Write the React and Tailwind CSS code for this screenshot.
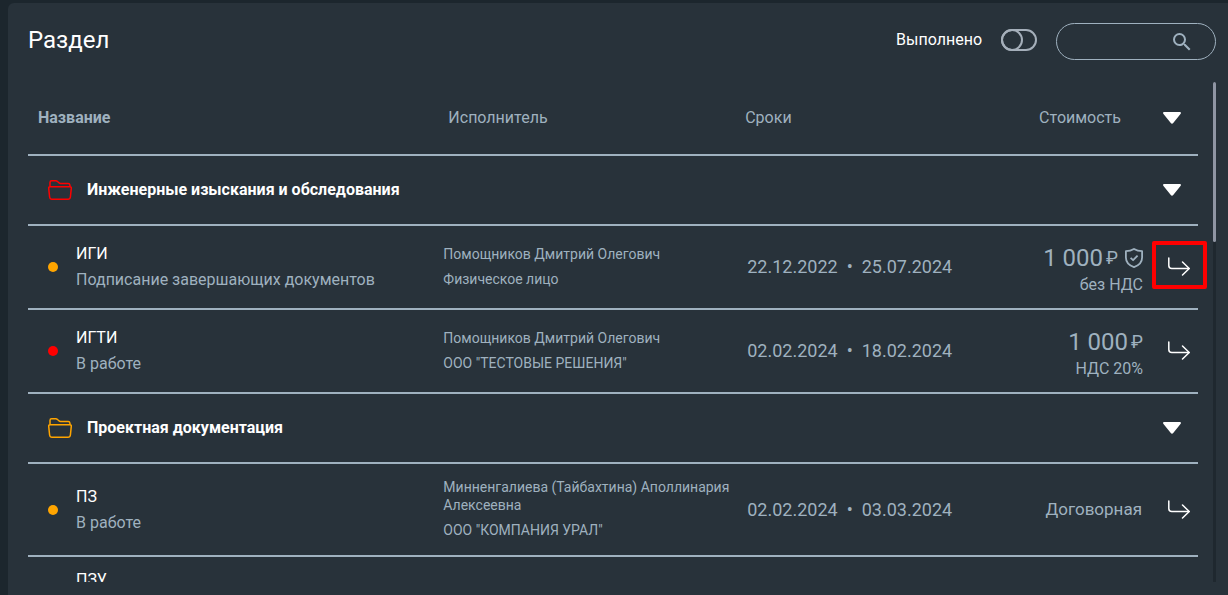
import { Fragment, useState } from 'react'
import { MdSearch } from 'react-icons/md'

const DOT_STYLES = {
  orange: 'bg-[#ffa500]',
  red: 'bg-[#ff0000]',
}

const FOLDER_STYLES = {
  orange: 'text-[#ffa500]',
  red: 'text-[#ff0000]',
}

const GROUPS = [
  {
    title: 'Инженерные изыскания и обследования',
    color: 'red',
    rows: [
      {
        code: 'ИГИ',
        status: 'Подписание завершающих документов',
        color: 'orange',
        person: 'Помощников Дмитрий Олегович',
        company: 'Физическое лицо',
        from: '22.12.2022',
        to: '25.07.2024',
        price: '1 000',
        tax: 'без НДС',
        secured: true,
        marked: true,
      },
      {
        code: 'ИГТИ',
        status: 'В работе',
        color: 'red',
        person: 'Помощников Дмитрий Олегович',
        company: 'ООО "ТЕСТОВЫЕ РЕШЕНИЯ"',
        from: '02.02.2024',
        to: '18.02.2024',
        price: '1 000',
        tax: 'НДС 20%',
      },
    ],
  },
  {
    title: 'Проектная документация',
    color: 'orange',
    rows: [
      {
        code: 'ПЗ',
        status: 'В работе',
        color: 'orange',
        person: 'Минненгалиева (Тайбахтина) Аполлинария Алексеевна',
        company: 'ООО "КОМПАНИЯ УРАЛ"',
        from: '02.02.2024',
        to: '03.03.2024',
      },
      { code: 'ПЗУ', status: 'В работе', color: 'orange', compact: true },
    ],
  },
]

function Triangle() {
  return (
    <svg width="18" height="12" viewBox="0 0 18 12" fill="currentColor">
      <path d="M1.2 0h15.6c1 0 1.5 1 .9 1.8L10.2 11c-.6.9-1.8.9-2.4 0L.3 1.8C-.3 1 .2 0 1.2 0z" />
    </svg>
  )
}

function Folder() {
  return (
    <svg width="24" height="20" viewBox="0 0 24 20" fill="none" stroke="currentColor" strokeWidth="1.5" strokeLinejoin="round">
      <path d="M2 6.700V2.400C2 1.400 2.600.8 3.600.8h4.200c.7 0 1.200.2 1.700.7l1.400 1.300c.5.5 1 .7 1.700.7h7.600c1 0 1.600.6 1.700 1.500l.2 1.700" />
      <path d="M2.200 6.700h19.600c1 0 1.600.6 1.500 1.500l-.9 8.800c-.2 1.400-1 2.200-2.400 2.200H4c-1.400 0-2.200-.8-2.400-2.200L.7 8.200c-.1-.9.5-1.500 1.500-1.500z" />
    </svg>
  )
}

function Shield() {
  return (
    <svg width="18" height="20" viewBox="0 0 18 20" fill="none" stroke="currentColor" strokeWidth="1.8" strokeLinejoin="round">
      <path d="M9 .9c2.500 1.500 5.200 2.200 8.100 2.300v6.300c0 4.500-3 7.800-8.100 9.600C3.900 17.300.9 14 .9 9.500V3.200C3.800 3.100 6.500 2.400 9 .9z" />
      <path d="M5.600 9.900l2.500 2.300 4.500-4.500" />
    </svg>
  )
}

function TurnArrow() {
  return (
    <svg width="24" height="20" viewBox="0 0 24 20" fill="none" stroke="currentColor" strokeWidth="1.5" strokeLinecap="round" strokeLinejoin="round">
      <path d="M1.800 1v7.500c0 2 1 3 3 3H22" />
      <path d="M15.500 5l6.700 6.500-6.700 6.500" />
    </svg>
  )
}

function GroupRow({ group, open, onToggle }) {
  return (
    <tr className="h-[70px] border-b-2 border-[#9fb1bf]">
      <td colSpan={4} className="pl-5">
        <div className="flex items-center gap-[15px] font-bold text-white">
          <span className={FOLDER_STYLES[group.color]}><Folder /></span>
          {group.title}
        </div>
      </td>
      <td className="pl-5">
        <button onClick={onToggle} aria-expanded={open} aria-label={group.title} className="block text-white">
          <Triangle />
        </button>
      </td>
    </tr>
  )
}

function Price({ row }) {
  if (row.compact) return null
  if (!row.price) return <div className="pr-px text-[17px]">Договорная</div>
  return (
    <div className="pt-2">
      <div className="flex items-center justify-end text-2xl leading-7">
        {row.price}
        <span className="ml-[3px] text-lg">₽</span>
        {row.secured && <span className="ml-[7px]"><Shield /></span>}
      </div>
      <div className="leading-[26px]">{row.tax}</div>
    </div>
  )
}

function ItemRow({ row }) {
  return (
    <tr className={`border-b-2 border-[#9fb1bf] ${row.compact ? 'h-[74px]' : 'h-[84px]'}`}>
      <td className="pl-5">
        <div className="flex items-center gap-[18px]">
          <span className={`size-[10px] rounded-full ${DOT_STYLES[row.color]}`} />
          <div className="leading-[26px]">
            <div className="text-white">{row.code}</div>
            <div>{row.status}</div>
          </div>
        </div>
      </td>
      <td className="pb-4 pt-[14px] text-sm leading-[18px]">
        <div className="mb-[7px]">{row.person}</div>
        <div>{row.company}</div>
      </td>
      <td className="text-lg">
        {row.from && (
          <div className="flex items-center gap-[9px] pl-[2px]">
            <span>{row.from}</span>
            <span>•</span>
            <span>{row.to}</span>
          </div>
        )}
      </td>
      <td className="text-right">
        <Price row={row} />
      </td>
      <td className="relative pl-6">
        <button aria-label={`Открыть ${row.code}`} className="block text-white">
          <TurnArrow />
        </button>
        {row.marked && (
          <div className="pointer-events-none absolute -right-[9px] top-[15px] h-12 w-[55px] rounded-[2px] border-4 border-[#ff0000]" />
        )}
      </td>
    </tr>
  )
}

export default function App() {
  const [closed, setClosed] = useState({})

  const toggle = (title) => setClosed(prev => ({ ...prev, [title]: !prev[title] }))

  return (
    <div className="h-screen bg-[#1c262d] pl-2 pt-[3px] font-['Roboto',sans-serif] text-base text-[#9fb1bf]">
      <main className="flex h-full flex-col rounded-tl-md bg-[#28323a] pb-[13px] pl-5 pr-3">
        <header className="flex h-[79px] shrink-0 items-start pt-5">
          <h1 className="text-2xl leading-[34px] text-white">Раздел</h1>
          <label className="ml-auto flex items-center gap-[19px] text-white">
            <span className="leading-[34px]">Выполнено</span>
            <input
              type="checkbox"
              className="relative h-[22px] w-9 appearance-none rounded-full border-2 border-[#a5afba] before:absolute before:-left-[2px] before:-top-[2px] before:size-[22px] before:rounded-full before:border-2 before:border-[#a5afba] before:content-[''] checked:before:left-3"
            />
          </label>
          <div className="ml-[19px] flex h-[37px] w-40 items-center rounded-full border border-[#9fb1bf] pl-4 pr-[21px]">
            <input type="search" aria-label="Поиск" className="w-full min-w-0 bg-transparent text-white outline-none" />
            <MdSearch className="size-6 shrink-0" />
          </div>
        </header>

        <div className="flex min-h-0 flex-1">
          <div className="flex-1 overflow-y-auto pr-[15px] [scrollbar-width:none]">
            <table className="w-full table-fixed border-collapse text-left">
              <colgroup>
                <col className="w-[35.5%]" />
                <col className="w-[25.8%]" />
                <col />
                <col className="w-[15%]" />
                <col className="w-[55px]" />
              </colgroup>
              <thead>
                <tr className="h-[73px] border-b-2 border-[#9fb1bf]">
                  <th className="pl-[10px] font-bold">Название</th>
                  <th className="pl-[5px] font-normal">Исполнитель</th>
                  <th className="font-normal">Сроки</th>
                  <th className="pr-[22px] text-right font-normal">Стоимость</th>
                  <th className="pl-5">
                    <button aria-label="Свернуть все" className="block text-white"><Triangle /></button>
                  </th>
                </tr>
              </thead>
              <tbody>
                {GROUPS.map(group => (
                  <Fragment key={group.title}>
                    <GroupRow group={group} open={!closed[group.title]} onToggle={() => toggle(group.title)} />
                    {!closed[group.title] && group.rows.map(row => <ItemRow key={row.code} row={row} />)}
                  </Fragment>
                ))}
              </tbody>
            </table>
          </div>
          {/* Scroll track */}
          <div className="w-[3px] bg-[#1f282f]">
            <div className="h-[32%] rounded-full bg-[#8f95a3]" />
          </div>
        </div>
      </main>
    </div>
  )
}
